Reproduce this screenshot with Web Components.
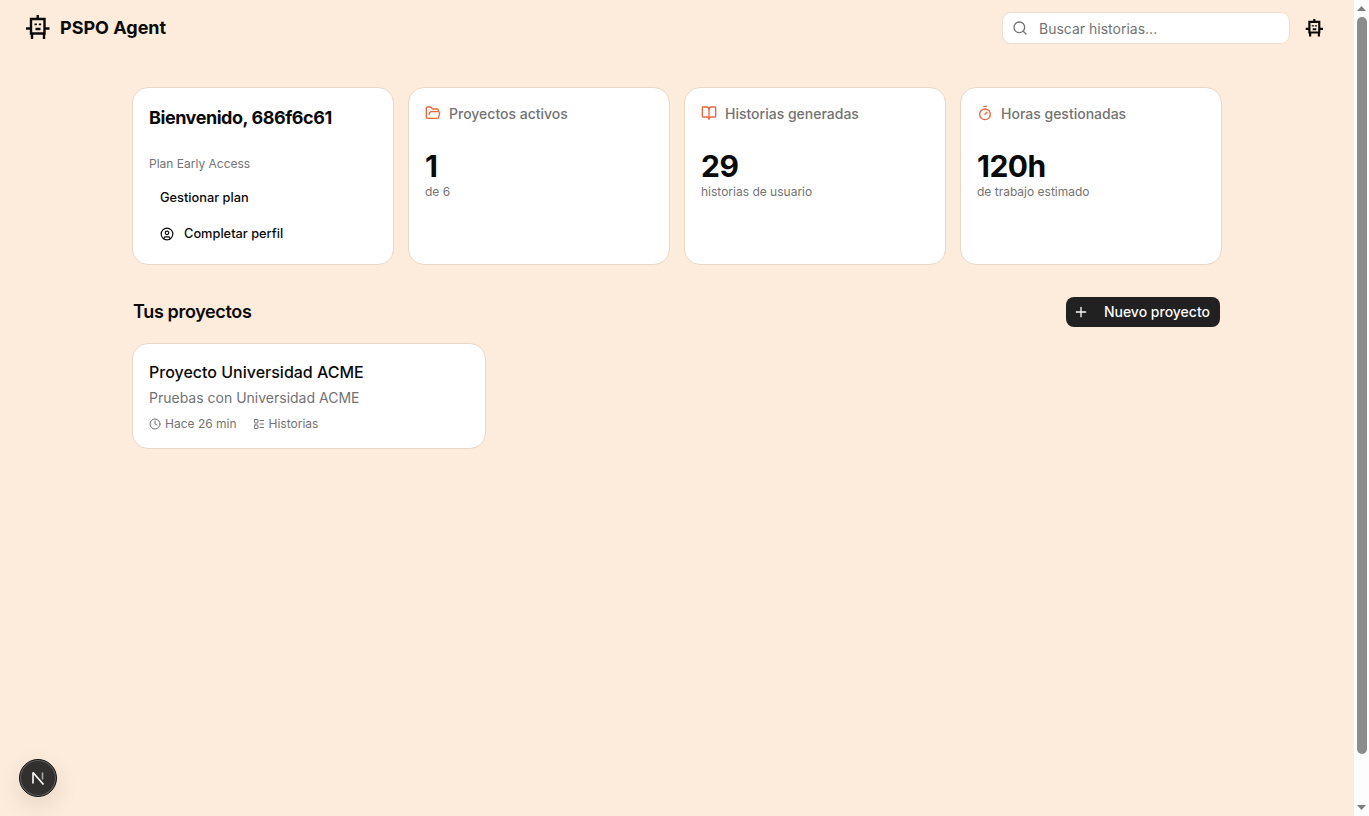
<!DOCTYPE html>
<html lang="es">
<head>
<meta charset="utf-8">
<title>PSPO Agent</title>
<style>
  html, body { margin: 0; height: 100%; overflow: hidden; }
  body { background: #fdebdb; font-family: Inter, "Liberation Sans", sans-serif; color: #0a0a0a; }
</style>
</head>
<body>
<app-shell>
  <top-bar></top-bar>
  <main-page>
    <section-stats>
      <welcome-card></welcome-card>
      <stat-card label="Proyectos activos" value="1" note="de 6" icon="folder"></stat-card>
      <stat-card label="Historias generadas" value="29" note="historias de usuario" icon="book"></stat-card>
      <stat-card label="Horas gestionadas" value="120h" note="de trabajo estimado" icon="timer"></stat-card>
    </section-stats>
    <projects-head></projects-head>
    <project-card name="Proyecto Universidad ACME" desc="Pruebas con Universidad ACME" time="Hace 26 min"></project-card>
  </main-page>
</app-shell>
<dev-badge></dev-badge>

<script>
const ROBOT = `
  <path d="M6 4h13.5v14.5H6z"/>
  <path d="M12.7 0v4M1 13.5h5M19.5 13.5H24.500M7 18.500V24M19 18.500V24"/>
  <path d="M10.700 8.500v1.700M15 8.500v1.700M10.500 14h5"/>`;

const ICONS = {
  folder: '<path d="m6 14 1.5-2.9A2 2 0 0 1 9.24 10H20a2 2 0 0 1 1.94 2.5l-1.54 6a2 2 0 0 1-1.95 1.5H4a2 2 0 0 1-2-2V5a2 2 0 0 1 2-2h3.9a2 2 0 0 1 1.69.9l.81 1.2a2 2 0 0 0 1.67.9H18a2 2 0 0 1 2 2v2"/>',
  book: '<path d="M12 7v14"/><path d="M3 18a1 1 0 0 1-1-1V4a1 1 0 0 1 1-1h5a4 4 0 0 1 4 4 4 4 0 0 1 4-4h5a1 1 0 0 1 1 1v13a1 1 0 0 1-1 1h-6a3 3 0 0 0-3 3 3 3 0 0 0-3-3z"/>',
  timer: '<line x1="10" x2="14" y1="2" y2="2"/><line x1="12" x2="15" y1="14" y2="11"/><circle cx="12" cy="14" r="8"/>'
};

function define(name, css, html) {
  customElements.define(name, class extends HTMLElement {
    connectedCallback() {
      if (this.shadowRoot) return;
      this.attachShadow({ mode: 'open' });
      const attr = k => this.getAttribute(k) || '';
      this.shadowRoot.innerHTML = `<style>${css}</style>${html(attr)}`;
    }
  });
}

define('app-shell', `
  :host { display: flex; height: 816px; }
  .page { flex: 1; min-width: 0; }
  .scrollbar { width: 15px; background: #fdfdfd; display: flex; flex-direction: column; align-items: center; }
  .arrow { height: 17px; display: flex; align-items: center; justify-content: center; }
  .thumb { width: 10px; height: 737px; background: #8c8c8c; border-radius: 5px; margin-bottom: auto; }
`, () => `
  <div class="page"><slot></slot></div>
  <div class="scrollbar">
    <div class="arrow"><svg width="9" height="5"><path d="M4.5 0 9 5H0z" fill="#7d7d7d"/></svg></div>
    <div class="thumb"></div>
    <div class="arrow"><svg width="9" height="5"><path d="M0 0h9L4.5 5z" fill="#7d7d7d"/></svg></div>
  </div>
`);

define('top-bar', `
  :host { display: flex; align-items: center; justify-content: space-between; height: 56px; padding: 0 30px 0 25px; }
  .brand { display: flex; align-items: center; gap: 9px; font-size: 18px; font-weight: 700; }
  .brand span { margin-bottom: 2px; }
  .tools { display: flex; align-items: center; gap: 15px; }
  .search { box-sizing: border-box; width: 288px; height: 32px; display: flex; align-items: center; gap: 11px; padding: 0 9px;
    background: #fff; border: 1px solid #ecdfd0; border-radius: 9px; color: #737373; font-size: 14px; }
  svg { fill: none; stroke: currentColor; display: block; }
  .search svg { stroke-linecap: round; stroke-linejoin: round; color: #737373; }
`, () => `
  <div class="brand">
    <svg width="26" height="26" viewBox="0 0 26 26" stroke-width="2.4">${ROBOT}</svg>
    <span>PSPO Agent</span>
  </div>
  <div class="tools">
    <div class="search">
      <svg width="16" height="16" viewBox="0 0 24 24" stroke-width="2"><circle cx="11" cy="11" r="8"/><path d="m21 21-4.3-4.3"/></svg>
      <span>Buscar historias...</span>
    </div>
    <svg width="19" height="19" viewBox="0 0 26 26" stroke-width="3">${ROBOT}</svg>
  </div>
`);

define('main-page', `
  :host { display: block; width: 1090px; margin: 31px auto 0; }
`, () => `<slot></slot>`);

define('section-stats', `
  :host { display: grid; grid-template-columns: repeat(4, 262px); gap: 14px; }
`, () => `<slot></slot>`);

const CARD = `box-sizing: border-box; background: #fff; border: 1px solid #e8d9c6; border-radius: 16px;`;

define('welcome-card', `
  :host { display: block; ${CARD} height: 178px; padding: 16px; }
  h2 { margin: 0; font-size: 18px; line-height: 28px; font-weight: 700; letter-spacing: -0.45px; }
  .plan { margin-top: 24px; font-size: 12px; line-height: 16px; color: #737373; }
  .link { display: flex; align-items: center; gap: 10px; height: 36px; padding-left: 11px; font-size: 12.8px; font-weight: 500; }
  .plan + .link { margin-top: 7px; }
  svg { fill: none; stroke: currentColor; stroke-width: 2; stroke-linecap: round; stroke-linejoin: round; margin-top: 1px; }
`, () => `
  <h2>Bienvenido, 686f6c61</h2>
  <div class="plan">Plan Early Access</div>
  <div class="link">Gestionar plan</div>
  <div class="link">
    <svg width="14" height="14" viewBox="0 0 24 24"><circle cx="12" cy="12" r="10"/><circle cx="12" cy="10" r="3"/><path d="M7 20.662V19a2 2 0 0 1 2-2h6a2 2 0 0 1 2 2v1.662"/></svg>
    <span>Completar perfil</span>
  </div>
`);

define('stat-card', `
  :host { display: block; ${CARD} height: 178px; padding: 15px 16px 16px; }
  .head { display: flex; align-items: center; gap: 8px; height: 20px; font-size: 14px; font-weight: 500; color: #737373; }
  svg { fill: none; stroke: #e8673c; stroke-width: 2; stroke-linecap: round; stroke-linejoin: round; }
  .value { margin-top: 25px; font-size: 30px; line-height: 36px; font-weight: 700; letter-spacing: -0.5px; }
  .note { font-size: 12px; line-height: 16px; color: #737373; }
`, attr => `
  <div class="head">
    <svg width="16" height="16" viewBox="0 0 24 24">${ICONS[attr('icon')]}</svg>
    <span>${attr('label')}</span>
  </div>
  <div class="value">${attr('value')}</div>
  <div class="note">${attr('note')}</div>
`);

define('projects-head', `
  :host { display: flex; align-items: center; justify-content: space-between; height: 30px; margin: 32px 2px 16px 1px; }
  h2 { margin: 0 0 2px; font-size: 18px; font-weight: 600; letter-spacing: -0.35px; }
  button { display: flex; align-items: center; gap: 15px; height: 30px; padding: 0 10px 0 7px; border: 0; border-radius: 8px;
    background: #212121; color: #fafafa; font: 500 14px Inter, "Liberation Sans", sans-serif; }
  button span { margin-bottom: 2px; }
  svg { fill: none; stroke: currentColor; stroke-width: 2; stroke-linecap: round; }
`, () => `
  <h2>Tus proyectos</h2>
  <button>
    <svg width="16" height="16" viewBox="0 0 24 24"><path d="M5 12h14M12 5v14"/></svg>
    <span>Nuevo proyecto</span>
  </button>
`);

define('project-card', `
  :host { display: block; ${CARD} width: 354px; height: 106px; padding: 16px; }
  h3 { margin: 0; font-size: 16px; line-height: 24px; font-weight: 500; }
  p { margin: 4px 0 0; font-size: 14px; line-height: 20px; color: #737373; }
  .meta { display: flex; gap: 16px; margin-top: 8px; font-size: 12px; line-height: 16px; color: #737373; }
  .meta div { display: flex; align-items: center; gap: 4px; }
  svg { fill: none; stroke: currentColor; stroke-width: 2; stroke-linecap: round; stroke-linejoin: round; }
`, attr => `
  <h3>${attr('name')}</h3>
  <p>${attr('desc')}</p>
  <div class="meta">
    <div>
      <svg width="12" height="12" viewBox="0 0 24 24"><circle cx="12" cy="12" r="10"/><path d="M12 6v6l4 2"/></svg>
      <span>${attr('time')}</span>
    </div>
    <div>
      <svg width="12" height="12" viewBox="0 0 24 24"><rect x="3" y="3" width="7" height="7" rx="1"/><rect x="3" y="14" width="7" height="7" rx="1"/><path d="M14 5h7M14 12h7M14 19h7"/></svg>
      <span>Historias</span>
    </div>
  </div>
`);

define('dev-badge', `
  :host { position: fixed; left: 19px; bottom: 19px; width: 38px; height: 38px; box-sizing: border-box; border-radius: 50%;
    background: #32302e; border: 1px solid #111; box-shadow: 0 0 0 1px rgba(255,255,255,.25) inset, 0 8px 24px rgba(0,0,0,.1);
    display: flex; align-items: center; justify-content: center; }
`, () => `
  <svg width="14" height="14" viewBox="0 0 14 14" fill="none">
    <path d="M2 1.500v11" stroke="#fff" stroke-width="1.6"/>
    <path d="M2 1.500 12.500 13.500" stroke="#fff" stroke-width="1.6"/>
    <path d="M11.500 1.500v7" stroke="#aaa" stroke-width="1.6"/>
  </svg>
`);
</script>
</body>
</html>
